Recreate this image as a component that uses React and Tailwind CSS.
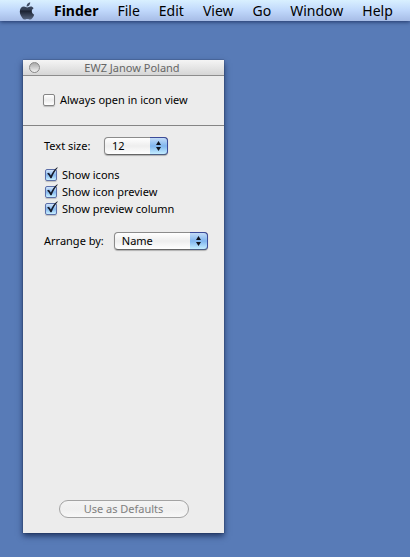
import { useState } from 'react';

const menus = ['File', 'Edit', 'View', 'Go', 'Window', 'Help'];

const AppleLogo = () => (
    <svg viewBox="0 0 16 18" className="h-[18px] w-4" aria-hidden="true">
        <defs>
            <linearGradient id="apple" x1="0" y1="0" x2="0" y2="1">
                <stop offset="0" stopColor="#46536a" />
                <stop offset="0.45" stopColor="#323d52" />
                <stop offset="0.5" stopColor="#1a2130" />
                <stop offset="1" stopColor="#56657f" />
            </linearGradient>
        </defs>
        <path
            fill="url(#apple)"
            d="M11.2 0.3c0.1 1.3-0.4 2.4-1.1 3.2-0.7 0.8-1.6 1.2-2.5 1.1-0.1-1.1 0.4-2.2 1.1-3 0.7-0.8 1.6-1.2 2.5-1.3zM14.6 6.2c-1.2 0.8-1.8 1.8-1.8 3.1 0 1.5 0.9 2.8 2.4 3.4-0.5 1.3-1.2 2.6-2 3.6-0.6 0.8-1.2 1.2-2 1.2-1.1 0-1.5-0.6-2.8-0.6s-1.8 0.6-2.8 0.6c-0.8 0-1.5-0.5-2.1-1.3C1.9 14.3 0.8 12 0.8 9.6c0-3.1 1.9-5 4.2-5 1.3 0 2.3 0.8 3.3 0.8 0.9 0 2-0.8 3.5-0.8 1.1 0 2.1 0.5 2.8 1.600z"
        />
    </svg>
);

const Checkbox = ({ label, checked, onChange }) => (
    <label className="flex items-center gap-[5px] leading-[17px]">
        <span className="relative flex">
            <input
                type="checkbox"
                checked={checked}
                onChange={onChange}
                className="h-3 w-3 appearance-none rounded-[2px] border border-[#858585] bg-linear-to-b from-white via-[#ececec] to-white shadow-[0_1px_1px_rgba(0,0,0,0.2)] checked:border-[#5c6fa8] checked:from-[#d3e5fa] checked:via-[#86b8ef] checked:to-[#c9f0ff]"
            />
            {checked && (
                <svg viewBox="0 0 14 14" className="pointer-events-none absolute -top-[2px] left-0 h-[14px] w-[14px]" aria-hidden="true">
                    <path d="M2 6.6l2-0.8 1.9 2.7C7.3 5.3 9.3 2.5 12.3 0.2l0.4 0.5C10.3 3.6 8.2 7 6.6 11.2H5.400C4.500 9.400 3.400 7.900 2 6.600z" fill="#151b2b" />
                </svg>
            )}
        </span>
        {label}
    </label>
);

const Select = ({ id, value, onChange, options, className }) => (
    <span className={`relative flex h-[18px] ${className}`}>
        <select
            id={id}
            value={value}
            onChange={onChange}
            className="h-full w-full appearance-none rounded-[4px] border border-[#8b8b8b] border-b-[#666] bg-linear-to-b from-white via-[#eeeeee] to-white pr-5 pl-[7px] leading-4 shadow-[0_1px_1px_rgba(0,0,0,0.25)]"
        >
            {options.map((option) => (
                <option key={option}>{option}</option>
            ))}
        </select>
        <span className="pointer-events-none absolute inset-y-0 right-0 flex w-[18px] items-center justify-center rounded-r-[4px] border border-l-0 border-[#3c4b99] border-b-[#4c5d82] bg-linear-to-b from-[#c3dcf8] via-[#80b5ee] to-[#c4edff]">
            <svg viewBox="0 0 5 10" className="h-[10px] w-[5px]" fill="#10131c" aria-hidden="true">
                <path d="M2.5 0L5 4H0zM2.5 10L0 6h5z" />
            </svg>
        </span>
    </span>
);

const App = () => {
    const [options, setOptions] = useState({
        alwaysIcon: false,
        icons: true,
        iconPreview: true,
        previewColumn: true,
        textSize: '12',
        arrangeBy: 'Name'
    });

    const toggle = (key) => () => setOptions({ ...options, [key]: !options[key] });
    const change = (key) => (e) => setOptions({ ...options, [key]: e.target.value });

    return (
        <div className="flex min-h-screen flex-col bg-[#587bb7] font-['Lucida_Grande','Noto_Sans',sans-serif] text-[11px] text-black">
            <nav className="flex h-[21px] items-center gap-[19px] bg-linear-to-b from-[#d9f0ff] via-[#c0d8fb] to-[#a6bce6] pl-[19px] text-sm leading-5 shadow-[0_1px_4px_rgba(10,25,70,0.7)]">
                <button type="button" aria-label="Apple menu">
                    <AppleLogo />
                </button>
                <button type="button" className="font-bold">Finder</button>
                {menus.map((menu) => (
                    <button key={menu} type="button">{menu}</button>
                ))}
            </nav>

            <main className="flex flex-1 flex-col px-[23px] pt-[39px] pb-6">
                <section className="flex w-full max-w-[201px] flex-1 flex-col bg-[#ececec] shadow-[0_3px_6px_rgba(0,15,50,0.65),0_0_1px_rgba(0,0,0,0.6)]">
                    <header className="flex h-4 items-center border-b border-[#8d8d8d] bg-linear-to-b from-[#f5f5f5] to-[#d6d6d6] pl-1.5">
                        <button
                            type="button"
                            aria-label="Close"
                            className="h-[11px] w-[11px] rounded-full border border-[#888] bg-linear-to-b from-[#a9a9a9] to-[#f2f2f2]"
                        />
                        <h1 className="flex-1 text-center leading-4 text-[#666]">EWZ Janow Poland</h1>
                    </header>

                    <div className="border-b border-[#858585] pt-[15px] pb-[17px] pl-5">
                        <Checkbox label="Always open in icon view" checked={options.alwaysIcon} onChange={toggle('alwaysIcon')} />
                    </div>

                    <div className="pt-[11px] pr-4 pl-[21px]">
                        <div className="flex items-center gap-3">
                            <label htmlFor="text-size" className="min-w-12">Text size:</label>
                            <Select
                                id="text-size"
                                value={options.textSize}
                                onChange={change('textSize')}
                                options={['10', '11', '12', '13', '14', '15', '16']}
                                className="w-16"
                            />
                        </div>

                        <div className="mt-[11px] pl-px">
                            <Checkbox label="Show icons" checked={options.icons} onChange={toggle('icons')} />
                            <Checkbox label="Show icon preview" checked={options.iconPreview} onChange={toggle('iconPreview')} />
                            <Checkbox label="Show preview column" checked={options.previewColumn} onChange={toggle('previewColumn')} />
                        </div>

                        <div className="mt-[15px] flex items-center gap-[10px]">
                            <label htmlFor="arrange-by">Arrange by:</label>
                            <Select
                                id="arrange-by"
                                value={options.arrangeBy}
                                onChange={change('arrangeBy')}
                                options={['Name', 'Date Modified', 'Date Created', 'Size', 'Kind', 'Label']}
                                className="flex-1"
                            />
                        </div>
                    </div>

                    <footer className="mt-auto flex justify-center pb-[15px]">
                        <button
                            type="button"
                            disabled
                            className="h-[18px] w-[130px] rounded-full border border-[#a3a3a3] bg-linear-to-b from-[#f4f4f4] via-[#efefef] to-[#f8f8f8] leading-4 text-[#808080]"
                        >
                            Use as Defaults
                        </button>
                    </footer>
                </section>
            </main>
        </div>
    );
};

export default App;
